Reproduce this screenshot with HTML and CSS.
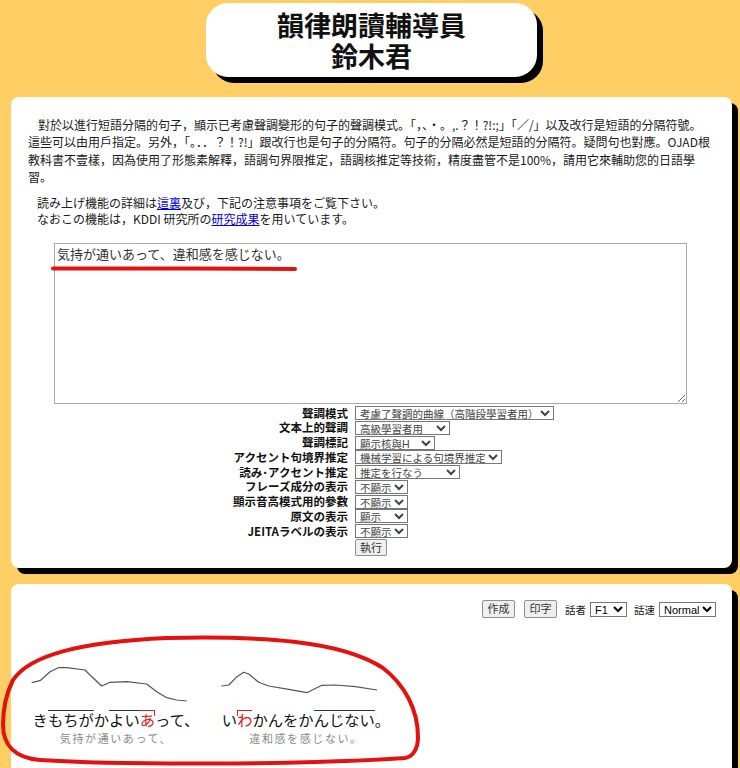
FILE: index.html
```html
<!DOCTYPE html>
<html lang="ja">
<head>
<meta charset="utf-8">
<title>韻律朗讀輔導員 鈴木君</title>
<link rel="stylesheet" href="styles.css">
</head>
<body>
<div class="page">
  <header class="title-box">
    <h1 class="title"><span class="title-line">韻律朗讀輔導員</span><span class="title-line">鈴木君</span></h1>
  </header>

  <section class="panel panel-main">
    <p class="intro">對於以進行短語分隔的句子，顯示已考慮聲調變形的句子的聲調模式。「，、・。,.？！?!:;」「／/」以及改行是短語的分隔符號。<br>這些可以由用戶指定。另外，「。．．？！?!」跟改行也是句子的分隔符。句子的分隔必然是短語的分隔符。疑問句也對應。OJAD根<br>教科書不壹樣，因為使用了形態素解釋，語調句界限推定，語調核推定等技術，精度盡管不是100%，請用它來輔助您的日語學<br>習。</p>
    <p class="note">読み上げ機能の詳細は<a href="#">這裏</a>及び，下記の注意事項をご覧下さい。<br>なおこの機能は，KDDI 研究所の<a href="#">研究成果</a>を用いています。</p>
    <textarea class="input">気持が通いあって、違和感を感じない。</textarea>
    <form class="options">
      <label class="opt-label">聲調模式</label>
      <div class="opt-ctl"><select class="sel w199"><option>考慮了聲調的曲線（高階段學習者用）</option></select></div>
      <label class="opt-label">文本上的聲調</label>
      <div class="opt-ctl"><select class="sel w95"><option>高級學習者用</option></select></div>
      <label class="opt-label">聲調標記</label>
      <div class="opt-ctl"><select class="sel w80"><option>顯示核與H</option></select></div>
      <label class="opt-label">アクセント句境界推定</label>
      <div class="opt-ctl"><select class="sel w147"><option>機械学習による句境界推定</option></select></div>
      <label class="opt-label">読み･アクセント推定</label>
      <div class="opt-ctl"><select class="sel w105"><option>推定を行なう</option></select></div>
      <label class="opt-label">フレーズ成分の表示</label>
      <div class="opt-ctl"><select class="sel w53"><option>不顯示</option></select></div>
      <label class="opt-label">顯示音高模式用的參數</label>
      <div class="opt-ctl"><select class="sel w53"><option>不顯示</option></select></div>
      <label class="opt-label">原文の表示</label>
      <div class="opt-ctl"><select class="sel w53"><option>顯示</option></select></div>
      <label class="opt-label">JEITAラベルの表示</label>
      <div class="opt-ctl"><select class="sel w53"><option>不顯示</option></select></div>
      <span class="opt-label"></span>
      <div class="opt-ctl run"><button type="button" class="btn">執行</button></div>
    </form>
  </section>

  <section class="panel panel-result">
    <div class="toolbar">
      <button type="button" class="btn btn-tb">作成</button>
      <button type="button" class="btn btn-tb">印字</button>
      <span class="tb-label">話者</span>
      <select class="sel sel-tb w37"><option>F1</option></select>
      <span class="tb-label">話速</span>
      <select class="sel sel-tb w57"><option>Normal</option></select>
    </div>
    <div class="phrases">
      <div class="phrase p1">
        <svg class="curve" width="170" height="46" viewBox="0 0 170 46">
          <polyline points="0.7,22.7 9,20.7 19,11.7 27.3,7.7 35.7,7.7 54,10 59,15 70.7,26 79,22.3 95.7,21.7 115.7,24 125.7,31.7 135.7,37.7 145.7,40 155.7,41"/>
        </svg>
        <div class="kana">き<span class="hi">もちが</span>か<span class="hi">よい<span class="acc">あ</span></span>って、</div>
        <div class="gloss">気持が通いあって、</div>
      </div>
      <div class="phrase p2">
        <svg class="curve" width="170" height="46" viewBox="0 0 170 46">
          <polyline points="0.3,26 7.7,25 16,16.7 22.7,12.3 27.7,14 37.7,22.3 47.7,26 67.7,29.3 86,32.7 92.7,29.3 101,25.3 114.3,25 134.3,26.7 156,30"/>
        </svg>
        <div class="kana">い<span class="hi"><span class="acc acc-rise">わ</span></span>かんをか<span class="hi">んじない</span>。</div>
        <div class="gloss">違和感を感じない。</div>
      </div>
    </div>
  </section>
</div>

<svg class="annotations" width="740" height="768" viewBox="0 0 740 768">
  <path d="M53 268.5 C 120 268, 220 268.5, 295 269"/>
  <path d="M13 680 C 30 655, 80 642, 167 638 C 260 636, 340 640, 383 668 C 405 685, 418 710, 418 737 C 418 750, 412 757, 405 758 C 300 765, 120 765, 40 760 C 15 758, 3 745, 3 725 C 3 705, 8 690, 13 680 Z"/>
</svg>
</body>
</html>
```

FILE: styles.css
```css
html, body {
  margin: 0;
  padding: 0;
}

body {
  background: #ffcf66;
  font-family: "Noto Sans CJK JP", "Noto Sans CJK TC", "Liberation Sans", sans-serif;
  color: #1a1a1a;
  width: 740px;
  height: 768px;
  overflow: hidden;
  position: relative;
}

.page {
  padding: 3px 8px 0 11px;
}

.title-box {
  width: 331px;
  height: 74px;
  margin: 0 auto;
  background: #fff;
  border-radius: 22px;
  box-shadow: 6px 6px 0 #000;
  display: flex;
  align-items: center;
  justify-content: center;
}

.title {
  margin: 0;
  font-size: 27px;
  font-weight: bold;
  text-align: center;
  color: #111;
  font-family: "Noto Sans CJK TC", "Noto Sans CJK JP", sans-serif;
  display: flex;
  flex-direction: column;
}

.title-line {
  display: block;
  line-height: 31px;
  height: 31px;
}

.panel {
  background: #fff;
  border-radius: 8px;
  box-shadow: 6px 6px 0 #000;
}

.panel-main {
  margin-top: 20px;
  padding: 19px 8px 12px 17px;
}

.intro {
  margin: 0;
  font-size: 12px;
  line-height: 17.4px;
  text-indent: 10px;
  white-space: nowrap;
}

.note {
  margin: 9px 0 0;
  padding-left: 9px;
  font-size: 12px;
  line-height: 16px;
}

.note a {
  color: #0000ee;
  text-decoration: underline;
}

.input {
  display: block;
  box-sizing: border-box;
  width: 633px;
  height: 161px;
  margin: 16px 0 0 26px;
  padding: 2px 2px;
  border: 1px solid #a9a9a9;
  font-family: "Noto Sans CJK JP", sans-serif;
  font-size: 13px;
  line-height: 16px;
  color: #333;
  resize: both;
}

.options {
  display: grid;
  grid-template-columns: 320px auto;
  column-gap: 7px;
  margin-top: 2px;
}

.opt-label {
  text-align: right;
  font-size: 11.5px;
  font-weight: bold;
  line-height: 14.75px;
  height: 14.75px;
  white-space: nowrap;
  color: #111;
}

.opt-ctl {
  height: 14.75px;
  display: flex;
  align-items: center;
}

.opt-ctl.run {
  height: auto;
  margin-top: 1px;
}

.sel {
  box-sizing: border-box;
  height: 14px;
  padding: 0;
  margin: 0;
  border: 1px solid #767676;
  border-radius: 0;
  background: #fff;
  font-family: "Liberation Sans", "Noto Sans CJK JP", sans-serif;
  font-size: 10.5px;
  line-height: 12px;
  color: #444;
}

.w199 { width: 199px; }
.w95 { width: 95px; }
.w80 { width: 80px; }
.w147 { width: 147px; }
.w105 { width: 105px; }
.w53 { width: 53px; }
.w37 { width: 37px; }
.w57 { width: 57px; }

.btn {
  box-sizing: border-box;
  height: 17px;
  padding: 0 4px;
  border: 1px solid #8f8f8f;
  border-radius: 2px;
  background: #efefef;
  font-family: "Liberation Sans", "Noto Sans CJK JP", sans-serif;
  font-size: 11px;
  line-height: 14px;
  color: #333;
}

.btn-tb {
  width: 33px;
  height: 18px;
  padding: 0;
}

.panel-result {
  margin-top: 16px;
  padding: 16px 16px 40px 20px;
  height: 300px;
}

.toolbar {
  display: flex;
  justify-content: flex-end;
  align-items: center;
  gap: 8px;
}

.toolbar .btn-tb + .btn-tb {
  margin-left: 1px;
}

.tb-label {
  font-size: 10.5px;
  margin-right: -4px;
}

.sel-tb + .tb-label {
  margin-left: -1px;
}

.sel-tb {
  height: 15px;
  font-size: 11px;
  color: #000;
}

.phrases {
  display: flex;
  gap: 20px;
  margin-top: 42px;
}

.phrase {
  display: flex;
  flex-direction: column;
  align-items: center;
}

.curve {
  align-self: flex-start;
  display: block;
}

.curve polyline {
  fill: none;
  stroke: #555;
  stroke-width: 1.2;
  stroke-linejoin: round;
}

.kana {
  font-size: 15.3px;
  line-height: 20px;
  color: #111;
  white-space: nowrap;
  margin-top: 3px;
}

.hi {
  display: inline-block;
  line-height: 17px;
  border-top: 1px solid #333;
  position: relative;
}

.acc {
  color: #e0201a;
  position: relative;
  display: inline-block;
  line-height: 17px;
  border-top: 1px solid #e0201a;
  margin-top: -1px;
}

.acc::after {
  content: "";
  position: absolute;
  right: 0;
  top: -1px;
  width: 1px;
  height: 6px;
  background: #e0201a;
}

.acc-rise::after {
  right: auto;
  left: 0;
}

.gloss {
  margin-top: 2px;
  font-size: 11px;
  line-height: 14px;
  letter-spacing: 1.6px;
  color: #888;
}

.annotations {
  position: absolute;
  left: 0;
  top: 0;
  pointer-events: none;
}

.annotations path {
  fill: none;
  stroke: #e3120f;
  stroke-width: 4;
  stroke-linecap: round;
  stroke-linejoin: round;
}
```
